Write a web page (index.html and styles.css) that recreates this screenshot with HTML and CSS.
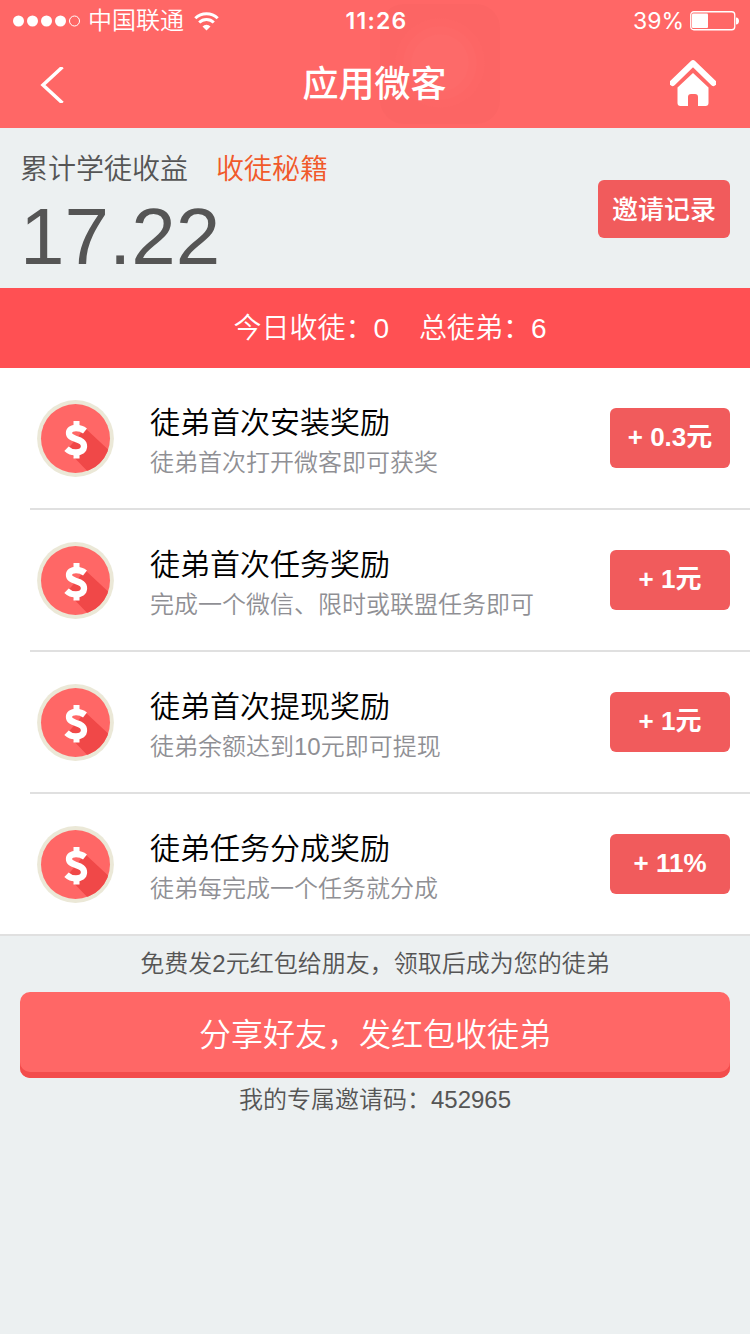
FILE: index.html
```
<!DOCTYPE html>
<html lang="zh-CN">
<head>
  <meta charset="UTF-8">
  <title>应用微客</title>
  <meta name="viewport" content="width=device-width, initial-scale=1.0">
  <link rel="stylesheet" href="styles.css">
</head>
<body>

<svg class="defs" width="0" height="0">
  <defs>
    <clipPath id="coin-clip"><circle cx="38.500" cy="38.500" r="34.500"/></clipPath>
    <symbol id="coin" viewBox="0 0 77 77">
      <circle cx="38.500" cy="38.500" r="38.400" fill="#ebe8d7"/>
      <circle cx="38.500" cy="38.500" r="34.500" fill="#ff6766"/>
      <path d="M48 28L77 55V77H56L30 50Z" fill="#f04848" clip-path="url(#coin-clip)"/>
      <path d="M48 31C45.500 29 42.500 28 39 28C34.500 28 32 30 32 33C32 36.500 35 37.500 39 39C44 40.700 47 42 47 46.300C47 50.500 43.500 52.500 39 52.500C35.500 52.500 32 51.200 29.500 48.800" fill="none" stroke="#fff" stroke-width="6.300"/>
      <path d="M36.500 21h6v6h-6zM36.500 52.500h6v6h-6z" fill="#fff"/>
    </symbol>
  </defs>
</svg>

<div class="header">
  <div class="touch"></div>
  <div class="status">
    <div class="status-left">
      <svg width="68" height="12" viewBox="0 0 68 12" fill="#fff">
        <circle cx="5.500" cy="6" r="5.500"/>
        <circle cx="19.500" cy="6" r="5.500"/>
        <circle cx="33.500" cy="6" r="5.500"/>
        <circle cx="47.500" cy="6" r="5.500"/>
        <circle cx="61.500" cy="6" r="5" fill="none" stroke="#fff"/>
      </svg>
      <span class="carrier">中国联通</span>
      <svg width="25" height="19" viewBox="0 0 25 19" fill="none" stroke="#fff" stroke-width="3">
        <path d="M1.300 6.300a16 16 0 0 1 22.400 0"/>
        <path d="M5.200 10.500a10.500 10.500 0 0 1 14.600 0"/>
        <path d="M12.500 18.500L8.500 14.500a5.700 5.700 0 0 1 8 0z" fill="#fff" stroke="none"/>
      </svg>
    </div>
    <div class="time">11:26</div>
    <div class="status-right">
      <span>39%</span>
      <svg width="50" height="20" viewBox="0 0 50 20">
        <rect x="0.750" y="0.750" width="44" height="18" rx="3" fill="none" stroke="#fff" stroke-width="1.300"/>
        <rect x="2" y="2.500" width="16" height="14.500" rx="1" fill="#fff"/>
        <path d="M46 6.500c4 0 4 7 0 7z" fill="#fff"/>
      </svg>
    </div>
  </div>
  <div class="nav">
    <svg class="back" width="24" height="36" viewBox="0 0 24 36" fill="none" stroke="#fff" stroke-width="3.500">
      <path d="M22.500 0L3 18L22.500 36"/>
    </svg>
    <h1>应用微客</h1>
    <svg width="46" height="46" viewBox="0 0 46 46">
      <path d="M2.500 23L23 3.200L43.500 23" fill="none" stroke="#fff" stroke-width="6" stroke-linecap="round" stroke-linejoin="round"/>
      <path d="M23 13L38.500 27.500V43a3 3 0 0 1-3 3H28V37a3 3 0 0 0-3-3h-4a3 3 0 0 0-3 3V46h-7.500a3 3 0 0 1-3-3V27.500Z" fill="#fff"/>
    </svg>
  </div>
</div>

<div class="income">
  <div>
    <p class="income-title">累计学徒收益<a class="tips">收徒秘籍</a></p>
    <p class="income-num">17.22</p>
  </div>
  <a class="btn record">邀请记录</a>
</div>

<div class="count">
  <span>今日收徒：0</span>
  <span>总徒弟：6</span>
</div>

<ul class="list">
  <li>
    <svg class="coin"><use href="#coin"/></svg>
    <div class="info">
      <h2>徒弟首次安装奖励</h2>
      <p>徒弟首次打开微客即可获奖</p>
    </div>
    <span class="btn reward">+ 0.3元</span>
  </li>
  <li>
    <svg class="coin"><use href="#coin"/></svg>
    <div class="info">
      <h2>徒弟首次任务奖励</h2>
      <p>完成一个微信、限时或联盟任务即可</p>
    </div>
    <span class="btn reward">+ 1元</span>
  </li>
  <li>
    <svg class="coin"><use href="#coin"/></svg>
    <div class="info">
      <h2>徒弟首次提现奖励</h2>
      <p>徒弟余额达到10元即可提现</p>
    </div>
    <span class="btn reward">+ 1元</span>
  </li>
  <li>
    <svg class="coin"><use href="#coin"/></svg>
    <div class="info">
      <h2>徒弟任务分成奖励</h2>
      <p>徒弟每完成一个任务就分成</p>
    </div>
    <span class="btn reward">+ 11%</span>
  </li>
</ul>

<div class="share">
  <p>免费发2元红包给朋友，领取后成为您的徒弟</p>
  <button type="button">分享好友，发红包收徒弟</button>
  <p class="code">我的专属邀请码：452965</p>
</div>

</body>
</html>
```
FILE: styles.css
```
* { box-sizing: border-box; margin: 0; padding: 0; }
body {
  min-height: 100vh;
  font-family: "Liberation Sans", "Noto Sans CJK SC", sans-serif;
  font-weight: 350;
  background: #ecf0f1;
  color: #555;
}
svg {
  display: block;
  flex: none;
}
.defs {
  position: absolute;
}
.header {
  position: relative;
  height: 128px;
  background: #ff6766;
  color: #fff;
}
/* faint assistive touch button */
.touch {
  position: absolute;
  left: 380px;
  top: 4px;
  width: 120px;
  height: 120px;
  border-radius: 24px;
  background: radial-gradient(circle at 60px 59px, #fd6a69 28px, #fd6867 29px, #fd6867 36px, #fd6665 37px, #fd6665 44px, #fc6564 45px);
}
.status {
  position: relative;
  display: grid;
  grid-template-columns: 1fr auto 1fr;
  align-items: center;
  height: 40px;
  padding: 0 10px 0 13px;
  font-family: Inter, "Noto Sans CJK SC", sans-serif;
  font-size: 24px;
  line-height: 42px;
}
.status-left, .status-right {
  display: flex;
  align-items: center;
}
.carrier {
  margin: 0 10px 0 7px;
}
.time {
  font-size: 23px;
  font-weight: 600;
  letter-spacing: 1.2px;
}
.status-right {
  justify-content: flex-end;
  gap: 6px;
}
.status-right span {
  font-size: 23px;
  font-weight: 400;
}
.nav {
  position: relative;
  display: flex;
  justify-content: space-between;
  align-items: center;
  height: 88px;
  padding: 0 34px 2px 40px;
}
.back {
  margin-top: 3px;
}
.nav h1 {
  padding-left: 15px;
  padding-top: 4px;
  font-size: 36px;
  font-weight: 500;
  line-height: 84px;
}
.income {
  display: flex;
  justify-content: space-between;
  height: 160px;
  padding: 20px 20px 0;
}
.income-title {
  font-size: 28px;
  line-height: 44px;
}
.tips {
  margin-left: 28px;
  color: #f1592a;
}
.income-num {
  font-size: 80px;
  line-height: 90px;
}
.btn {
  flex: none;
  border-radius: 6px;
  background: #f15b5c;
  color: #fff;
  font-size: 26px;
  text-align: center;
}
.record {
  width: 132px;
  height: 58px;
  margin-top: 32px;
  font-weight: 500;
  line-height: 60px;
}
.count {
  display: flex;
  justify-content: center;
  gap: 30px;
  height: 80px;
  padding-left: 30px;
  background: #ff5053;
  color: #fff;
  font-size: 28px;
  line-height: 82px;
}
.list {
  padding-left: 30px;
  border-bottom: 2px solid #e0e0e0;
  background: #fff;
  list-style: none;
}
.list li {
  display: flex;
  align-items: center;
  height: 142px;
  padding: 0 20px 0 7px;
  border-bottom: 2px solid #e0e0e0;
}
.list li:last-child {
  height: 140px;
  border-bottom: none;
}
.coin {
  width: 77px;
  height: 77px;
}
.info {
  flex: 1;
  padding: 7px 0 0 36px;
}
.info h2 {
  color: #000;
  font-size: 30px;
  font-weight: 350;
  line-height: 42px;
}
.info p {
  color: #8f8f94;
  font-size: 24px;
  line-height: 38px;
}
.reward {
  width: 120px;
  height: 60px;
  font-weight: bold;
  line-height: 58px;
}
.share {
  padding: 0 20px;
  text-align: center;
}
.share p {
  font-size: 24px;
  line-height: 56px;
}
.share button {
  display: block;
  width: 100%;
  height: 86px;
  border: none;
  border-radius: 10px;
  background: #ff6766;
  box-shadow: inset 0 -6px #f34c4c;
  color: #fff;
  font: inherit;
  font-size: 32px;
  line-height: 86px;
}
.share .code {
  line-height: 44px;
}
```
